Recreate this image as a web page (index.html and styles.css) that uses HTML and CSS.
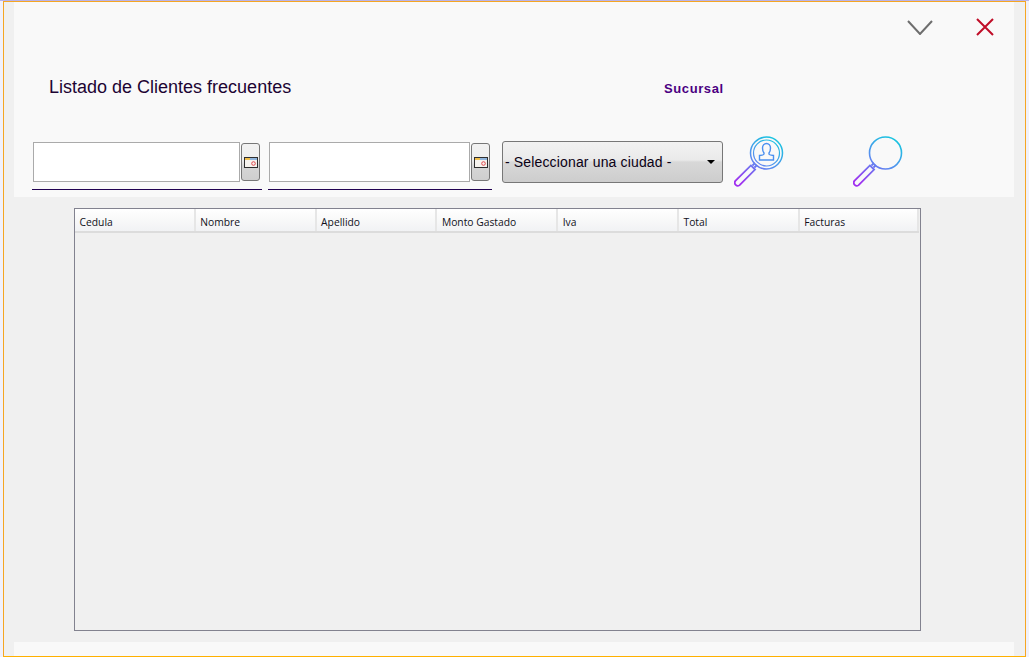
FILE: index.html

```html
<!DOCTYPE html>
<html lang="es">
<head>
  <meta charset="UTF-8" />
  <title>Listado de Clientes frecuentes</title>
  <link rel="stylesheet" href="styles.css">
</head>
<body>

<svg class="defs" width="0" height="0">
  <defs>
    <linearGradient id="lens" gradientUnits="userSpaceOnUse" x1="36" y1="0" x2="8" y2="48">
      <stop offset="0" stop-color="#18c4e0" />
      <stop offset="0.5" stop-color="#5b8cf0" />
      <stop offset="1" stop-color="#a030f0" />
    </linearGradient>
  </defs>
</svg>

<div class="window">
  <div class="panel">
    <div class="window-actions">
      <button class="icon-btn chevron">
        <svg width="26" height="15" viewBox="0 0 26 15"><path d="M1 1 L13 14 L25 1" fill="none" stroke="#6e6e6e" stroke-width="2" /></svg>
      </button>
      <button class="icon-btn close">
        <svg width="18" height="18" viewBox="0 0 18 18"><path d="M1 1 L17 17 M17 1 L1 17" fill="none" stroke="#c00d28" stroke-width="2" /></svg>
      </button>
    </div>

    <div class="title-row">
      <h2>Listado de Clientes frecuentes</h2>
      <span class="branch">Sucursal</span>
    </div>

    <div class="filters">
      <div class="date-field first">
        <div class="date-row">
          <input type="text" class="date-input" />
          <button class="date-btn">
            <svg width="14" height="11" viewBox="0 0 14 11">
              <rect x="0.5" y="0.5" width="13" height="10" fill="#f6f3ee" stroke="#2e2e2e" />
              <rect x="1" y="1" width="5" height="2" fill="#f2c04e" />
              <rect x="6" y="1" width="7" height="2" fill="#8fb4dc" />
              <circle cx="9.5" cy="6.5" r="1.8" fill="none" stroke="#e0474c" />
            </svg>
          </button>
        </div>
      </div>
      <div class="date-field second">
        <div class="date-row">
          <input type="text" class="date-input" />
          <button class="date-btn">
            <svg width="14" height="11" viewBox="0 0 14 11">
              <rect x="0.5" y="0.5" width="13" height="10" fill="#f6f3ee" stroke="#2e2e2e" />
              <rect x="1" y="1" width="5" height="2" fill="#f2c04e" />
              <rect x="6" y="1" width="7" height="2" fill="#8fb4dc" />
              <circle cx="9.5" cy="6.5" r="1.8" fill="none" stroke="#e0474c" />
            </svg>
          </button>
        </div>
      </div>
      <div class="city-select">
        <span>- Seleccionar una ciudad -</span>
        <i class="caret"></i>
      </div>
      <button class="search-btn client">
        <svg width="50" height="51" viewBox="0 0 50 51">
          <circle cx="32.5" cy="17" r="16" fill="none" stroke="url(#lens)" stroke-width="1.5" />
          <circle cx="32.5" cy="17" r="13" fill="none" stroke="url(#lens)" stroke-width="1.2" />
          <path d="M28.5 12 a4 4.5 0 0 1 8 0 q0 3 -1.5 5 v1 q0 1 4.5 1.5 v4.5 h-14 v-4.5 q4.5 -0.5 4.5 -1.5 v-1 q-1.5 -2 -1.5 -5 z" fill="none" stroke="#4a90f0" stroke-width="1.4" />
          <path d="M5.6 49.1 L21.1 33.6 L16.9 29.4 L1.4 44.9 A3 3 0 0 0 5.6 49.1 Z M20.5 31.5 L23 29 M18.5 29.5 L21 27" fill="none" stroke="url(#lens)" stroke-width="1.8" />
        </svg>
      </button>
      <button class="search-btn plain">
        <svg width="50" height="51" viewBox="0 0 50 51">
          <circle cx="32.5" cy="17" r="16" fill="none" stroke="url(#lens)" stroke-width="1.6" />
          <path d="M5.6 49.1 L21.1 33.6 L16.9 29.4 L1.4 44.9 A3 3 0 0 0 5.6 49.1 Z M20.5 31.5 L23 29 M18.5 29.5 L21 27" fill="none" stroke="url(#lens)" stroke-width="1.8" />
        </svg>
      </button>
    </div>
  </div>

  <div class="table-wrap">
    <div class="table-head">
      <div class="col">Cedula</div>
      <div class="col">Nombre</div>
      <div class="col">Apellido</div>
      <div class="col">Monto Gastado</div>
      <div class="col">Iva</div>
      <div class="col">Total</div>
      <div class="col">Facturas</div>
    </div>
  </div>

  <div class="footer-strip"></div>
</div>

</body>
</html>
```

FILE: styles.css

```css
html, body {
  margin: 0;
  height: 100%;
  overflow: hidden;
}
body {
  font-family: "Liberation Sans", sans-serif;
  padding: 0 3px;
  box-sizing: border-box;
  background: #f1f1fb;
  border-top: 1px solid #b9b4ea;
}
.defs {
  position: absolute;
}
.window {
  height: 656px;
  width: 1023px;
  box-sizing: border-box;
  border: 1px solid #f5a623;
  border-bottom-color: #ffb000;
  background: #f0f0f0;
  padding: 0 11px 0 10px;
  display: flex;
  flex-direction: column;
}
.panel {
  background: #f9f9f9;
  height: 195px;
  box-sizing: border-box;
  padding: 15px 0 0 18px;
}
.window-actions {
  display: flex;
  justify-content: flex-end;
  align-items: center;
  gap: 43px;
  padding-right: 20px;
  height: 20px;
}
.icon-btn, .search-btn, .date-btn {
  background: none;
  border: none;
  padding: 0;
  display: block;
}
.icon-btn svg, .search-btn svg, .date-btn svg {
  display: block;
}
.title-row {
  display: flex;
  align-items: center;
  padding: 0 0 0 17px;
  margin-top: 40px;
  height: 20px;
}
.title-row h2 {
  margin: 0;
  font-size: 18px;
  font-weight: normal;
  color: #1d0433;
  width: 615px;
}
.branch {
  font-size: 13px;
  font-weight: bold;
  letter-spacing: 0.6px;
  color: #4b0082;
  margin-top: 2px;
}
.filters {
  display: flex;
  align-items: flex-start;
  margin-top: 44px;
}
.date-field {
  border-bottom: 1px solid #200050;
  height: 49px;
  box-sizing: border-box;
}
.date-field.first {
  width: 230px;
  margin-right: 6px;
}
.date-field.second {
  width: 224px;
  margin-right: 10px;
}
.date-row {
  display: flex;
  align-items: center;
  padding-left: 1px;
  gap: 1px;
  margin-top: 1px;
}
.date-input {
  height: 40px;
  min-width: 0;
  box-sizing: border-box;
  border: 1px solid #aaa;
  background: #fff;
  padding: 0;
}
.date-field.first .date-input {
  width: 207px;
}
.date-field.second .date-input {
  width: 201px;
}
.date-btn {
  width: 19px;
  height: 38px;
  box-sizing: border-box;
  border: 1px solid #777;
  border-radius: 3px;
  background: linear-gradient(#f2f2f2 0, #eee 45%, #d6d6d6 60%, #cfcfcf 100%);
  display: flex;
  align-items: center;
  justify-content: center;
}
.city-select {
  width: 221px;
  height: 42px;
  box-sizing: border-box;
  border: 1px solid #777;
  border-radius: 3px;
  background: linear-gradient(#f2f2f2 0, #eaeaea 45%, #d8d8d8 50%, #cdcdcd 100%);
  display: flex;
  align-items: center;
  justify-content: space-between;
  padding: 0 7px 0 2px;
  font-size: 14px;
  letter-spacing: 0.15px;
  color: #0a0014;
}
.caret {
  width: 0;
  height: 0;
  border-left: 4px solid transparent;
  border-right: 4px solid transparent;
  border-top: 4px solid #000;
}
.search-btn {
  margin-top: -5px;
}
.search-btn.client {
  margin-left: 11px;
}
.search-btn.plain {
  margin-left: 69px;
}
.table-wrap {
  margin: 11px 0 0 60px;
  width: 847px;
  height: 423px;
  box-sizing: border-box;
  border: 1px solid #82828f;
  background: #f0f0f0;
}
.table-head {
  display: flex;
  height: 24px;
  box-sizing: border-box;
  border-bottom: 2px solid #dcdcdc;
  background: linear-gradient(#fff 0, #fbfbfb 30%, #f1f2f4 100%);
  margin-right: 1px;
}
.col {
  flex: none;
  width: 120.8px;
  box-sizing: border-box;
  border-right: 2px solid #e6e6e6;
  padding: 6px 0 0 4.5px;
  font-family: "Open Sans", sans-serif;
  font-size: 10.3px;
  line-height: 15px;
  color: #10101a;
}
.col:last-child {
  width: 119px;
}
.footer-strip {
  background: #f9f9f9;
  margin-top: 11px;
  flex: 1;
}
```
